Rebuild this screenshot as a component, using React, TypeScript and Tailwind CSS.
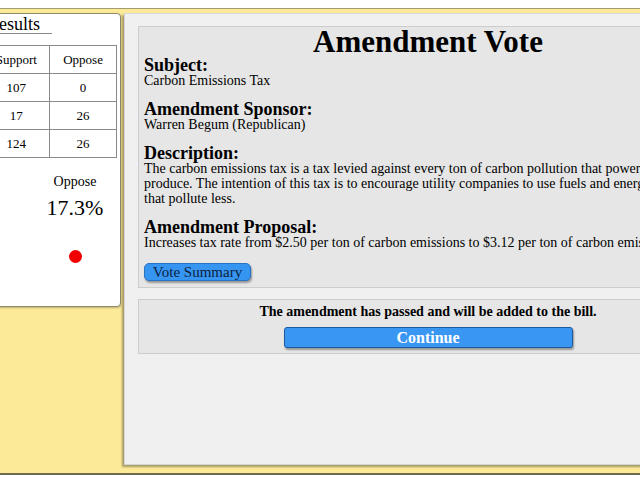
import React from 'react';

const serif = "font-['Liberation_Serif','Times_New_Roman',serif]";

const rows = [
  { party: 'Democrats', support: 107, oppose: 0 },
  { party: 'Republicans', support: 17, oppose: 26 },
  { party: 'Total', support: 124, oppose: 26 },
];

function ResultsPanel() {
  return (
    <div className="-ml-[150px] w-[271px] h-[294px] shrink-0 bg-white border border-[#8e8b6c] rounded-[4px] shadow-[0_1px_2px_rgba(0,0,0,0.25)] pl-[5px]">
      <div className="w-fit ml-[129px] pt-[1px] text-[18px] leading-[18px] border-b border-[#8a8a8a] pr-[12px] pl-[2px]">Results</div>
      <table className="mt-[11px] w-[261px] border-collapse text-[13px] leading-[15px] text-center">
        <thead>
          <tr className="h-[28px]">
            <th className="border border-[#8a8a8a] w-[127px] font-normal">Party</th>
            <th className="border border-[#8a8a8a] w-[67px] font-normal">Support</th>
            <th className="border border-[#8a8a8a] w-[67px] font-normal">Oppose</th>
          </tr>
        </thead>
        <tbody>
          {rows.map((r) => (
            <tr key={r.party} className="h-[28px]">
              <td className="border border-[#8a8a8a]">{r.party}</td>
              <td className="border border-[#8a8a8a]">{r.support}</td>
              <td className="border border-[#8a8a8a]">{r.oppose}</td>
            </tr>
          ))}
        </tbody>
      </table>
      <div className="flex mt-[16px]">
        <div className="w-[100px] ml-[60px] flex flex-col items-center">
          <div className="text-[14px] leading-[16px]">Support</div>
          <div className="mt-[6px] text-[22px] leading-[24px]">82.7%</div>
          <div className="mt-[30px] w-[13px] h-[13px] rounded-full bg-[#1fae2c]" />
        </div>
        <div className="w-[60px] ml-[29px] flex flex-col items-center">
          <div className="text-[14px] leading-[16px]">Oppose</div>
          <div className="mt-[6px] text-[22px] leading-[24px]">17.3%</div>
          <div className="mt-[30px] w-[13px] h-[13px] rounded-full bg-[#f00000]" />
        </div>
      </div>
    </div>
  );
}

function Field({ label, children, first }: { label: string; children: React.ReactNode; first?: boolean }) {
  return (
    <div className={first ? 'mt-[1px]' : 'mt-[14px]'}>
      <div className="text-[18px] leading-[15px] font-bold">{label}</div>
      <div className="text-[14px] leading-[15px] whitespace-nowrap">{children}</div>
    </div>
  );
}

function AmendmentPanel() {
  return (
    <div className="w-[620px] h-[452px] shrink-0 bg-[#f0f0f0] border border-[#d6d6d6] shadow-[-2px_2px_2px_rgba(0,0,0,0.35)] pt-[12px] pl-[13px]">
      <div className="w-[580px] bg-[#e6e6e6] border border-[#cdcdcd] pl-[5px] pb-[6px] overflow-hidden">
        <h1 className="text-center text-[31px] leading-[30px] font-bold -ml-[5px]">Amendment Vote</h1>
        <Field label="Subject:" first>Carbon Emissions Tax</Field>
        <Field label="Amendment Sponsor:">Warren Begum (Republican)</Field>
        <Field label="Description:">
          The carbon emissions tax is a tax levied against every ton of carbon pollution that power plants
          <br />
          produce. The intention of this tax is to encourage utility companies to use fuels and energy sources
          <br />
          that pollute less.
        </Field>
        <Field label="Amendment Proposal:">
          Increases tax rate from $2.50 per ton of carbon emissions to $3.12 per ton of carbon emissions.
        </Field>
        <button
          type="button"
          className="mt-[13px] w-[107px] h-[18px] bg-[#3795f2] border border-[#2a73c2] rounded-[5px] shadow-[1px_2px_2px_rgba(0,0,0,0.35)] text-[15px] leading-[15px] text-[#0b1e3c] flex items-center justify-center"
        >
          Vote Summary
        </button>
      </div>
      <div className="mt-[11px] w-[580px] bg-[#e6e6e6] border border-[#cdcdcd] pt-[4px] pb-[5px] flex flex-col items-center">
        <div className="text-[14px] leading-[16px] font-bold">The amendment has passed and will be added to the bill.</div>
        <button
          type="button"
          className="mt-[7px] w-[289px] h-[21px] bg-[#3996f3] border border-[#1c5a9c] rounded-[3px] shadow-[1px_2px_2px_rgba(0,0,0,0.35)] text-white font-bold text-[16px] leading-[16px]"
        >
          Continue
        </button>
      </div>
    </div>
  );
}

export default function App() {
  return (
    <div className={`w-[640px] h-[480px] overflow-hidden bg-white text-black ${serif}`}>
      <div className="mt-[8px] h-[467px] bg-[#fdea98] border-t border-t-[#a39d6d] border-b-2 border-b-[#6e6a52] pt-[4px] flex gap-[3px] items-start">
        <ResultsPanel />
        <AmendmentPanel />
      </div>
    </div>
  );
}
